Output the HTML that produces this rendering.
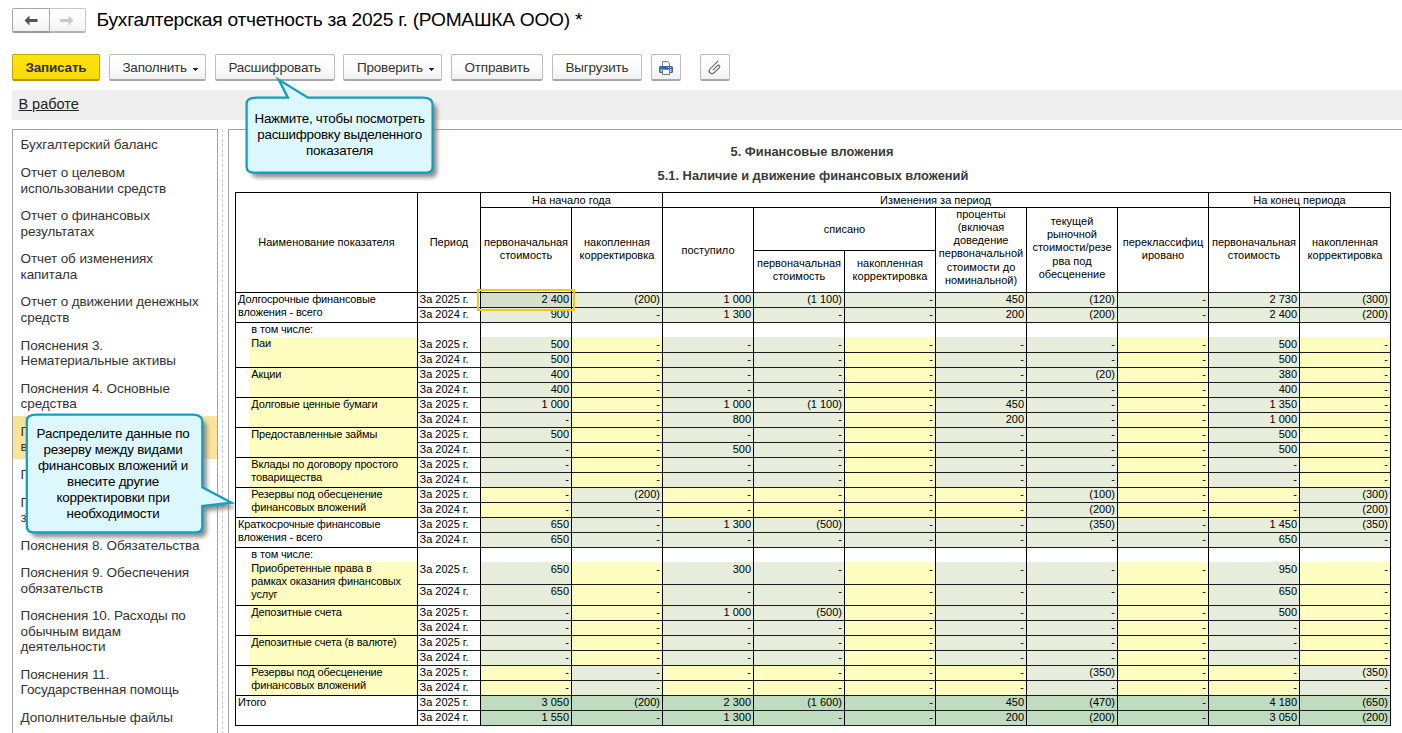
<!DOCTYPE html><html><head><meta charset="utf-8"><style>
html,body{margin:0;padding:0;}
body{width:1402px;height:733px;overflow:hidden;position:relative;background:#fff;font-family:"Liberation Sans",sans-serif;color:#333;}
.t{position:absolute;white-space:nowrap;}
.r{position:absolute;}
.btn{position:absolute;top:54px;height:24px;border:1px solid #bcbcbc;border-bottom:2px solid #a8a8a8;border-radius:2px;background:linear-gradient(#ffffff 0%,#fdfdfd 45%,#f1f1f1 100%);box-sizing:content-box;}
</style></head><body>
<div class="r" style="left:49px;top:8px;width:35px;height:22px;border:1px solid #c6c6c6;border-bottom:2px solid #b4b4b4;border-radius:0 2px 2px 0;background:linear-gradient(#fff 0%,#fcfcfc 50%,#f1f1f1 100%);"></div>
<div class="r" style="left:12px;top:8px;width:36px;height:22px;border:1px solid #a9a9a9;border-bottom:2px solid #9a9a9a;border-radius:2px 0 0 2px;background:linear-gradient(#fff 0%,#fcfcfc 50%,#f1f1f1 100%);"></div>
<svg class="r" style="left:0;top:0" width="100" height="40">
<path d="M24.5 20.5 L29.5 15.5 L29.5 19 L37.5 19 L37.5 22 L29.5 22 L29.5 25.5 Z" fill="#555"/>
<path d="M73.5 20.5 L68.5 15.5 L68.5 19 L60 19 L60 22 L68.5 22 L68.5 25.5 Z" fill="#c9c9c9"/>
</svg>
<div class="t" style="left:96.6px;top:8.45px;font-size:19.2px;line-height:23px;letter-spacing:-0.26px;color:#000;">Бухгалтерская отчетность за 2025 г. (РОМАШКА ООО) *</div>
<div class="btn" style="left:12px;width:86px;background:linear-gradient(#ffe312,#fbdb00);border-color:#c2a900;border-bottom-color:#ad9500;"></div>
<div class="t" style="left:25.5px;top:59.52px;font-size:13.5px;line-height:16px;font-weight:700;letter-spacing:-0.2px;">Записать</div>
<div class="btn" style="left:109px;width:95px;"></div>
<div class="t" style="left:122.4px;top:59.52px;font-size:13.5px;line-height:16px;letter-spacing:-0.2px;">Заполнить</div>
<div class="r" style="left:193px;top:68px;width:5px;height:1px;background:#222;"></div>
<div class="r" style="left:194px;top:69px;width:3px;height:1px;background:#222;"></div>
<div class="r" style="left:195px;top:70px;width:1px;height:1px;background:#222;"></div>
<div class="btn" style="left:215px;width:118px;"></div>
<div class="t" style="left:228.4px;top:59.52px;font-size:13.5px;line-height:16px;letter-spacing:-0.2px;">Расшифровать</div>
<div class="btn" style="left:343px;width:97px;"></div>
<div class="t" style="left:357px;top:59.52px;font-size:13.5px;line-height:16px;letter-spacing:-0.2px;">Проверить</div>
<div class="r" style="left:429px;top:68px;width:5px;height:1px;background:#222;"></div>
<div class="r" style="left:430px;top:69px;width:3px;height:1px;background:#222;"></div>
<div class="r" style="left:431px;top:70px;width:1px;height:1px;background:#222;"></div>
<div class="btn" style="left:451px;width:90px;"></div>
<div class="t" style="left:464.5px;top:59.52px;font-size:13.5px;line-height:16px;letter-spacing:-0.2px;">Отправить</div>
<div class="btn" style="left:552px;width:88px;"></div>
<div class="t" style="left:565.5px;top:59.52px;font-size:13.5px;line-height:16px;letter-spacing:-0.2px;">Выгрузить</div>
<div class="btn" style="left:651px;width:28px;"></div>
<svg class="r" style="left:651px;top:54px" width="30" height="26" viewBox="651 54 30 26">
<path d="M662.5 61.5 H667.5 L669.5 63.5 V67 H662.5 Z" fill="#fff" stroke="#5a8aa8" stroke-width="1"/>
<rect x="659" y="66" width="14" height="7" rx="1.5" fill="#3a64a2"/>
<rect x="660.5" y="69" width="11" height="3" fill="#8fd6c9"/>
<rect x="668" y="67" width="1" height="1" fill="#fff"/><rect x="670" y="67" width="1" height="1" fill="#fff"/>
<path d="M662.5 69.5 H669.5 V74.5 H662.5 Z" fill="#fff" stroke="#5a8aa8" stroke-width="1"/>
</svg>
<div class="btn" style="left:700px;width:28px;"></div>
<svg class="r" style="left:700px;top:54px" width="30" height="26" viewBox="700 54 30 26">
<g transform="translate(0.6 0.6) rotate(45 714.8 67)"><path d="M712 60.3 V71.8 A2.8 2.8 0 0 0 717.6 71.8 V64.2 A1.4 1.4 0 0 0 714.8 64.2 V70.6" fill="none" stroke="#555" stroke-width="1"/></g>
</svg>
<div class="r" style="left:12px;top:90px;width:1390px;height:30px;background:#efefef;"></div>
<div class="t" style="left:18.4px;top:95.88px;font-size:14.5px;line-height:17px;color:#222;text-decoration:underline;">В работе</div>
<div class="r" style="left:12px;top:129px;width:204px;height:620px;border:1px solid #a3a3a3;background:#fff;"></div>
<div class="t" style="left:20.6px;top:137.42px;font-size:13.5px;line-height:16px;letter-spacing:-0.1px;">Бухгалтерский баланс</div>
<div class="t" style="left:20.6px;top:165.12px;font-size:13.5px;line-height:16px;letter-spacing:-0.1px;">Отчет о целевом</div>
<div class="t" style="left:20.6px;top:180.52px;font-size:13.5px;line-height:16px;letter-spacing:-0.1px;">использовании средств</div>
<div class="t" style="left:20.6px;top:208.22px;font-size:13.5px;line-height:16px;letter-spacing:-0.1px;">Отчет о финансовых</div>
<div class="t" style="left:20.6px;top:223.62px;font-size:13.5px;line-height:16px;letter-spacing:-0.1px;">результатах</div>
<div class="t" style="left:20.6px;top:251.32px;font-size:13.5px;line-height:16px;letter-spacing:-0.1px;">Отчет об изменениях</div>
<div class="t" style="left:20.6px;top:266.72px;font-size:13.5px;line-height:16px;letter-spacing:-0.1px;">капитала</div>
<div class="t" style="left:20.6px;top:294.42px;font-size:13.5px;line-height:16px;letter-spacing:-0.1px;">Отчет о движении денежных</div>
<div class="t" style="left:20.6px;top:309.82px;font-size:13.5px;line-height:16px;letter-spacing:-0.1px;">средств</div>
<div class="t" style="left:20.6px;top:337.52px;font-size:13.5px;line-height:16px;letter-spacing:-0.1px;">Пояснения 3.</div>
<div class="t" style="left:20.6px;top:352.92px;font-size:13.5px;line-height:16px;letter-spacing:-0.1px;">Нематериальные активы</div>
<div class="t" style="left:20.6px;top:380.62px;font-size:13.5px;line-height:16px;letter-spacing:-0.1px;">Пояснения 4. Основные</div>
<div class="t" style="left:20.6px;top:396.02px;font-size:13.5px;line-height:16px;letter-spacing:-0.1px;">средства</div>
<div class="r" style="left:13px;top:416.00000000000006px;width:204px;height:43px;background:#fbe39b;"></div>
<div class="t" style="left:20.6px;top:423.72px;font-size:13.5px;line-height:16px;letter-spacing:-0.1px;">Пояснения 5. Финансовые</div>
<div class="t" style="left:20.6px;top:439.12px;font-size:13.5px;line-height:16px;letter-spacing:-0.1px;">вложения</div>
<div class="t" style="left:20.6px;top:466.82px;font-size:13.5px;line-height:16px;letter-spacing:-0.1px;">Пояснения 6. Запасы</div>
<div class="t" style="left:20.6px;top:494.52px;font-size:13.5px;line-height:16px;letter-spacing:-0.1px;">Пояснения 7. Дебиторская</div>
<div class="t" style="left:20.6px;top:509.92px;font-size:13.5px;line-height:16px;letter-spacing:-0.1px;">задолженность</div>
<div class="t" style="left:20.6px;top:537.62px;font-size:13.5px;line-height:16px;letter-spacing:-0.1px;">Пояснения 8. Обязательства</div>
<div class="t" style="left:20.6px;top:565.32px;font-size:13.5px;line-height:16px;letter-spacing:-0.1px;">Пояснения 9. Обеспечения</div>
<div class="t" style="left:20.6px;top:580.72px;font-size:13.5px;line-height:16px;letter-spacing:-0.1px;">обязательств</div>
<div class="t" style="left:20.6px;top:608.42px;font-size:13.5px;line-height:16px;letter-spacing:-0.1px;">Пояснения 10. Расходы по</div>
<div class="t" style="left:20.6px;top:623.82px;font-size:13.5px;line-height:16px;letter-spacing:-0.1px;">обычным видам</div>
<div class="t" style="left:20.6px;top:639.22px;font-size:13.5px;line-height:16px;letter-spacing:-0.1px;">деятельности</div>
<div class="t" style="left:20.6px;top:666.92px;font-size:13.5px;line-height:16px;letter-spacing:-0.1px;">Пояснения 11.</div>
<div class="t" style="left:20.6px;top:682.32px;font-size:13.5px;line-height:16px;letter-spacing:-0.1px;">Государственная помощь</div>
<div class="t" style="left:20.6px;top:710.02px;font-size:13.5px;line-height:16px;letter-spacing:-0.1px;">Дополнительные файлы</div>
<div class="r" style="left:222px;top:129px;width:0;height:610px;border-left:1px dashed #c9c9c9;"></div>
<div class="r" style="left:228px;top:129px;width:1200px;height:620px;border-left:1px solid #a3a3a3;border-top:1px solid #a3a3a3;"></div>
<div class="t" style="left:612px;top:143.75px;font-size:12.85px;line-height:15px;font-weight:700;color:#3a3a3a;width:400px;text-align:center;">5. Финансовые вложения</div>
<div class="t" style="left:513px;top:168.05px;font-size:12.85px;line-height:15px;font-weight:700;color:#3a3a3a;width:600px;text-align:center;">5.1. Наличие и движение финансовых вложений</div>
<div class="t" style="left:238px;top:293.49px;font-size:11px;line-height:13px;letter-spacing:-0.15px;color:#000;">Долгосрочные финансовые</div>
<div class="t" style="left:238px;top:306.39px;font-size:11px;line-height:13px;letter-spacing:-0.15px;color:#000;">вложения - всего</div>
<div class="r" style="left:481px;top:293px;width:90px;height:14px;background:#d6dfcb;"></div>
<div class="t" style="left:481px;top:293.19px;font-size:11px;line-height:13px;color:#000;width:88px;text-align:right;">2 400</div>
<div class="r" style="left:572px;top:293px;width:90px;height:14px;background:#e6eedb;"></div>
<div class="t" style="left:572px;top:293.19px;font-size:11px;line-height:13px;color:#000;width:88px;text-align:right;">(200)</div>
<div class="r" style="left:663px;top:293px;width:90px;height:14px;background:#e6eedb;"></div>
<div class="t" style="left:663px;top:293.19px;font-size:11px;line-height:13px;color:#000;width:88px;text-align:right;">1 000</div>
<div class="r" style="left:754px;top:293px;width:90px;height:14px;background:#e6eedb;"></div>
<div class="t" style="left:754px;top:293.19px;font-size:11px;line-height:13px;color:#000;width:88px;text-align:right;">(1 100)</div>
<div class="r" style="left:845px;top:293px;width:90px;height:14px;background:#e6eedb;"></div>
<div class="t" style="left:845px;top:293.19px;font-size:11px;line-height:13px;color:#000;width:88px;text-align:right;">-</div>
<div class="r" style="left:936px;top:293px;width:90px;height:14px;background:#e6eedb;"></div>
<div class="t" style="left:936px;top:293.19px;font-size:11px;line-height:13px;color:#000;width:88px;text-align:right;">450</div>
<div class="r" style="left:1027px;top:293px;width:90px;height:14px;background:#e6eedb;"></div>
<div class="t" style="left:1027px;top:293.19px;font-size:11px;line-height:13px;color:#000;width:88px;text-align:right;">(120)</div>
<div class="r" style="left:1118px;top:293px;width:90px;height:14px;background:#e6eedb;"></div>
<div class="t" style="left:1118px;top:293.19px;font-size:11px;line-height:13px;color:#000;width:88px;text-align:right;">-</div>
<div class="r" style="left:1209px;top:293px;width:90px;height:14px;background:#e6eedb;"></div>
<div class="t" style="left:1209px;top:293.19px;font-size:11px;line-height:13px;color:#000;width:88px;text-align:right;">2 730</div>
<div class="r" style="left:1300px;top:293px;width:90px;height:14px;background:#e6eedb;"></div>
<div class="t" style="left:1300px;top:293.19px;font-size:11px;line-height:13px;color:#000;width:88px;text-align:right;">(300)</div>
<div class="t" style="left:419.5px;top:293.19px;font-size:11px;line-height:13px;color:#000;">За 2025 г.</div>
<div class="r" style="left:481px;top:308px;width:90px;height:14px;background:#e6eedb;"></div>
<div class="t" style="left:481px;top:308.19px;font-size:11px;line-height:13px;color:#000;width:88px;text-align:right;">900</div>
<div class="r" style="left:572px;top:308px;width:90px;height:14px;background:#e6eedb;"></div>
<div class="t" style="left:572px;top:308.19px;font-size:11px;line-height:13px;color:#000;width:88px;text-align:right;">-</div>
<div class="r" style="left:663px;top:308px;width:90px;height:14px;background:#e6eedb;"></div>
<div class="t" style="left:663px;top:308.19px;font-size:11px;line-height:13px;color:#000;width:88px;text-align:right;">1 300</div>
<div class="r" style="left:754px;top:308px;width:90px;height:14px;background:#e6eedb;"></div>
<div class="t" style="left:754px;top:308.19px;font-size:11px;line-height:13px;color:#000;width:88px;text-align:right;">-</div>
<div class="r" style="left:845px;top:308px;width:90px;height:14px;background:#e6eedb;"></div>
<div class="t" style="left:845px;top:308.19px;font-size:11px;line-height:13px;color:#000;width:88px;text-align:right;">-</div>
<div class="r" style="left:936px;top:308px;width:90px;height:14px;background:#e6eedb;"></div>
<div class="t" style="left:936px;top:308.19px;font-size:11px;line-height:13px;color:#000;width:88px;text-align:right;">200</div>
<div class="r" style="left:1027px;top:308px;width:90px;height:14px;background:#e6eedb;"></div>
<div class="t" style="left:1027px;top:308.19px;font-size:11px;line-height:13px;color:#000;width:88px;text-align:right;">(200)</div>
<div class="r" style="left:1118px;top:308px;width:90px;height:14px;background:#e6eedb;"></div>
<div class="t" style="left:1118px;top:308.19px;font-size:11px;line-height:13px;color:#000;width:88px;text-align:right;">-</div>
<div class="r" style="left:1209px;top:308px;width:90px;height:14px;background:#e6eedb;"></div>
<div class="t" style="left:1209px;top:308.19px;font-size:11px;line-height:13px;color:#000;width:88px;text-align:right;">2 400</div>
<div class="r" style="left:1300px;top:308px;width:90px;height:14px;background:#e6eedb;"></div>
<div class="t" style="left:1300px;top:308.19px;font-size:11px;line-height:13px;color:#000;width:88px;text-align:right;">(200)</div>
<div class="t" style="left:419.5px;top:308.19px;font-size:11px;line-height:13px;color:#000;">За 2024 г.</div>
<div class="t" style="left:251.3px;top:323.49px;font-size:11px;line-height:13px;letter-spacing:-0.15px;color:#000;">в том числе:</div>
<div class="r" style="left:249px;top:337px;width:168px;height:30px;background:#fffec0;"></div>
<div class="t" style="left:251.3px;top:337.49px;font-size:11px;line-height:13px;letter-spacing:-0.15px;color:#000;">Паи</div>
<div class="r" style="left:481px;top:337px;width:90px;height:15px;background:#e6eedb;"></div>
<div class="t" style="left:481px;top:338.19px;font-size:11px;line-height:13px;color:#000;width:88px;text-align:right;">500</div>
<div class="r" style="left:572px;top:337px;width:90px;height:15px;background:#fffec0;"></div>
<div class="t" style="left:572px;top:338.19px;font-size:11px;line-height:13px;color:#000;width:88px;text-align:right;">-</div>
<div class="r" style="left:663px;top:337px;width:90px;height:15px;background:#e6eedb;"></div>
<div class="t" style="left:663px;top:338.19px;font-size:11px;line-height:13px;color:#000;width:88px;text-align:right;">-</div>
<div class="r" style="left:754px;top:337px;width:90px;height:15px;background:#e6eedb;"></div>
<div class="t" style="left:754px;top:338.19px;font-size:11px;line-height:13px;color:#000;width:88px;text-align:right;">-</div>
<div class="r" style="left:845px;top:337px;width:90px;height:15px;background:#fffec0;"></div>
<div class="t" style="left:845px;top:338.19px;font-size:11px;line-height:13px;color:#000;width:88px;text-align:right;">-</div>
<div class="r" style="left:936px;top:337px;width:90px;height:15px;background:#e6eedb;"></div>
<div class="t" style="left:936px;top:338.19px;font-size:11px;line-height:13px;color:#000;width:88px;text-align:right;">-</div>
<div class="r" style="left:1027px;top:337px;width:90px;height:15px;background:#e6eedb;"></div>
<div class="t" style="left:1027px;top:338.19px;font-size:11px;line-height:13px;color:#000;width:88px;text-align:right;">-</div>
<div class="r" style="left:1118px;top:337px;width:90px;height:15px;background:#fffec0;"></div>
<div class="t" style="left:1118px;top:338.19px;font-size:11px;line-height:13px;color:#000;width:88px;text-align:right;">-</div>
<div class="r" style="left:1209px;top:337px;width:90px;height:15px;background:#e6eedb;"></div>
<div class="t" style="left:1209px;top:338.19px;font-size:11px;line-height:13px;color:#000;width:88px;text-align:right;">500</div>
<div class="r" style="left:1300px;top:337px;width:90px;height:15px;background:#fffec0;"></div>
<div class="t" style="left:1300px;top:338.19px;font-size:11px;line-height:13px;color:#000;width:88px;text-align:right;">-</div>
<div class="t" style="left:419.5px;top:338.19px;font-size:11px;line-height:13px;color:#000;">За 2025 г.</div>
<div class="r" style="left:481px;top:353px;width:90px;height:14px;background:#e6eedb;"></div>
<div class="t" style="left:481px;top:353.19px;font-size:11px;line-height:13px;color:#000;width:88px;text-align:right;">500</div>
<div class="r" style="left:572px;top:353px;width:90px;height:14px;background:#fffec0;"></div>
<div class="t" style="left:572px;top:353.19px;font-size:11px;line-height:13px;color:#000;width:88px;text-align:right;">-</div>
<div class="r" style="left:663px;top:353px;width:90px;height:14px;background:#e6eedb;"></div>
<div class="t" style="left:663px;top:353.19px;font-size:11px;line-height:13px;color:#000;width:88px;text-align:right;">-</div>
<div class="r" style="left:754px;top:353px;width:90px;height:14px;background:#e6eedb;"></div>
<div class="t" style="left:754px;top:353.19px;font-size:11px;line-height:13px;color:#000;width:88px;text-align:right;">-</div>
<div class="r" style="left:845px;top:353px;width:90px;height:14px;background:#fffec0;"></div>
<div class="t" style="left:845px;top:353.19px;font-size:11px;line-height:13px;color:#000;width:88px;text-align:right;">-</div>
<div class="r" style="left:936px;top:353px;width:90px;height:14px;background:#e6eedb;"></div>
<div class="t" style="left:936px;top:353.19px;font-size:11px;line-height:13px;color:#000;width:88px;text-align:right;">-</div>
<div class="r" style="left:1027px;top:353px;width:90px;height:14px;background:#e6eedb;"></div>
<div class="t" style="left:1027px;top:353.19px;font-size:11px;line-height:13px;color:#000;width:88px;text-align:right;">-</div>
<div class="r" style="left:1118px;top:353px;width:90px;height:14px;background:#fffec0;"></div>
<div class="t" style="left:1118px;top:353.19px;font-size:11px;line-height:13px;color:#000;width:88px;text-align:right;">-</div>
<div class="r" style="left:1209px;top:353px;width:90px;height:14px;background:#e6eedb;"></div>
<div class="t" style="left:1209px;top:353.19px;font-size:11px;line-height:13px;color:#000;width:88px;text-align:right;">500</div>
<div class="r" style="left:1300px;top:353px;width:90px;height:14px;background:#fffec0;"></div>
<div class="t" style="left:1300px;top:353.19px;font-size:11px;line-height:13px;color:#000;width:88px;text-align:right;">-</div>
<div class="t" style="left:419.5px;top:353.19px;font-size:11px;line-height:13px;color:#000;">За 2024 г.</div>
<div class="r" style="left:249px;top:368px;width:168px;height:29px;background:#fffec0;"></div>
<div class="t" style="left:251.3px;top:368.49px;font-size:11px;line-height:13px;letter-spacing:-0.15px;color:#000;">Акции</div>
<div class="r" style="left:481px;top:368px;width:90px;height:14px;background:#e6eedb;"></div>
<div class="t" style="left:481px;top:368.19px;font-size:11px;line-height:13px;color:#000;width:88px;text-align:right;">400</div>
<div class="r" style="left:572px;top:368px;width:90px;height:14px;background:#fffec0;"></div>
<div class="t" style="left:572px;top:368.19px;font-size:11px;line-height:13px;color:#000;width:88px;text-align:right;">-</div>
<div class="r" style="left:663px;top:368px;width:90px;height:14px;background:#e6eedb;"></div>
<div class="t" style="left:663px;top:368.19px;font-size:11px;line-height:13px;color:#000;width:88px;text-align:right;">-</div>
<div class="r" style="left:754px;top:368px;width:90px;height:14px;background:#e6eedb;"></div>
<div class="t" style="left:754px;top:368.19px;font-size:11px;line-height:13px;color:#000;width:88px;text-align:right;">-</div>
<div class="r" style="left:845px;top:368px;width:90px;height:14px;background:#fffec0;"></div>
<div class="t" style="left:845px;top:368.19px;font-size:11px;line-height:13px;color:#000;width:88px;text-align:right;">-</div>
<div class="r" style="left:936px;top:368px;width:90px;height:14px;background:#e6eedb;"></div>
<div class="t" style="left:936px;top:368.19px;font-size:11px;line-height:13px;color:#000;width:88px;text-align:right;">-</div>
<div class="r" style="left:1027px;top:368px;width:90px;height:14px;background:#e6eedb;"></div>
<div class="t" style="left:1027px;top:368.19px;font-size:11px;line-height:13px;color:#000;width:88px;text-align:right;">(20)</div>
<div class="r" style="left:1118px;top:368px;width:90px;height:14px;background:#fffec0;"></div>
<div class="t" style="left:1118px;top:368.19px;font-size:11px;line-height:13px;color:#000;width:88px;text-align:right;">-</div>
<div class="r" style="left:1209px;top:368px;width:90px;height:14px;background:#e6eedb;"></div>
<div class="t" style="left:1209px;top:368.19px;font-size:11px;line-height:13px;color:#000;width:88px;text-align:right;">380</div>
<div class="r" style="left:1300px;top:368px;width:90px;height:14px;background:#fffec0;"></div>
<div class="t" style="left:1300px;top:368.19px;font-size:11px;line-height:13px;color:#000;width:88px;text-align:right;">-</div>
<div class="t" style="left:419.5px;top:368.19px;font-size:11px;line-height:13px;color:#000;">За 2025 г.</div>
<div class="r" style="left:481px;top:383px;width:90px;height:14px;background:#e6eedb;"></div>
<div class="t" style="left:481px;top:383.19px;font-size:11px;line-height:13px;color:#000;width:88px;text-align:right;">400</div>
<div class="r" style="left:572px;top:383px;width:90px;height:14px;background:#fffec0;"></div>
<div class="t" style="left:572px;top:383.19px;font-size:11px;line-height:13px;color:#000;width:88px;text-align:right;">-</div>
<div class="r" style="left:663px;top:383px;width:90px;height:14px;background:#e6eedb;"></div>
<div class="t" style="left:663px;top:383.19px;font-size:11px;line-height:13px;color:#000;width:88px;text-align:right;">-</div>
<div class="r" style="left:754px;top:383px;width:90px;height:14px;background:#e6eedb;"></div>
<div class="t" style="left:754px;top:383.19px;font-size:11px;line-height:13px;color:#000;width:88px;text-align:right;">-</div>
<div class="r" style="left:845px;top:383px;width:90px;height:14px;background:#fffec0;"></div>
<div class="t" style="left:845px;top:383.19px;font-size:11px;line-height:13px;color:#000;width:88px;text-align:right;">-</div>
<div class="r" style="left:936px;top:383px;width:90px;height:14px;background:#e6eedb;"></div>
<div class="t" style="left:936px;top:383.19px;font-size:11px;line-height:13px;color:#000;width:88px;text-align:right;">-</div>
<div class="r" style="left:1027px;top:383px;width:90px;height:14px;background:#e6eedb;"></div>
<div class="t" style="left:1027px;top:383.19px;font-size:11px;line-height:13px;color:#000;width:88px;text-align:right;">-</div>
<div class="r" style="left:1118px;top:383px;width:90px;height:14px;background:#fffec0;"></div>
<div class="t" style="left:1118px;top:383.19px;font-size:11px;line-height:13px;color:#000;width:88px;text-align:right;">-</div>
<div class="r" style="left:1209px;top:383px;width:90px;height:14px;background:#e6eedb;"></div>
<div class="t" style="left:1209px;top:383.19px;font-size:11px;line-height:13px;color:#000;width:88px;text-align:right;">400</div>
<div class="r" style="left:1300px;top:383px;width:90px;height:14px;background:#fffec0;"></div>
<div class="t" style="left:1300px;top:383.19px;font-size:11px;line-height:13px;color:#000;width:88px;text-align:right;">-</div>
<div class="t" style="left:419.5px;top:383.19px;font-size:11px;line-height:13px;color:#000;">За 2024 г.</div>
<div class="r" style="left:249px;top:398px;width:168px;height:29px;background:#fffec0;"></div>
<div class="t" style="left:251.3px;top:398.49px;font-size:11px;line-height:13px;letter-spacing:-0.15px;color:#000;">Долговые ценные бумаги</div>
<div class="r" style="left:481px;top:398px;width:90px;height:14px;background:#e6eedb;"></div>
<div class="t" style="left:481px;top:398.19px;font-size:11px;line-height:13px;color:#000;width:88px;text-align:right;">1 000</div>
<div class="r" style="left:572px;top:398px;width:90px;height:14px;background:#fffec0;"></div>
<div class="t" style="left:572px;top:398.19px;font-size:11px;line-height:13px;color:#000;width:88px;text-align:right;">-</div>
<div class="r" style="left:663px;top:398px;width:90px;height:14px;background:#e6eedb;"></div>
<div class="t" style="left:663px;top:398.19px;font-size:11px;line-height:13px;color:#000;width:88px;text-align:right;">1 000</div>
<div class="r" style="left:754px;top:398px;width:90px;height:14px;background:#e6eedb;"></div>
<div class="t" style="left:754px;top:398.19px;font-size:11px;line-height:13px;color:#000;width:88px;text-align:right;">(1 100)</div>
<div class="r" style="left:845px;top:398px;width:90px;height:14px;background:#fffec0;"></div>
<div class="t" style="left:845px;top:398.19px;font-size:11px;line-height:13px;color:#000;width:88px;text-align:right;">-</div>
<div class="r" style="left:936px;top:398px;width:90px;height:14px;background:#e6eedb;"></div>
<div class="t" style="left:936px;top:398.19px;font-size:11px;line-height:13px;color:#000;width:88px;text-align:right;">450</div>
<div class="r" style="left:1027px;top:398px;width:90px;height:14px;background:#e6eedb;"></div>
<div class="t" style="left:1027px;top:398.19px;font-size:11px;line-height:13px;color:#000;width:88px;text-align:right;">-</div>
<div class="r" style="left:1118px;top:398px;width:90px;height:14px;background:#fffec0;"></div>
<div class="t" style="left:1118px;top:398.19px;font-size:11px;line-height:13px;color:#000;width:88px;text-align:right;">-</div>
<div class="r" style="left:1209px;top:398px;width:90px;height:14px;background:#e6eedb;"></div>
<div class="t" style="left:1209px;top:398.19px;font-size:11px;line-height:13px;color:#000;width:88px;text-align:right;">1 350</div>
<div class="r" style="left:1300px;top:398px;width:90px;height:14px;background:#fffec0;"></div>
<div class="t" style="left:1300px;top:398.19px;font-size:11px;line-height:13px;color:#000;width:88px;text-align:right;">-</div>
<div class="t" style="left:419.5px;top:398.19px;font-size:11px;line-height:13px;color:#000;">За 2025 г.</div>
<div class="r" style="left:481px;top:413px;width:90px;height:14px;background:#e6eedb;"></div>
<div class="t" style="left:481px;top:413.19px;font-size:11px;line-height:13px;color:#000;width:88px;text-align:right;">-</div>
<div class="r" style="left:572px;top:413px;width:90px;height:14px;background:#fffec0;"></div>
<div class="t" style="left:572px;top:413.19px;font-size:11px;line-height:13px;color:#000;width:88px;text-align:right;">-</div>
<div class="r" style="left:663px;top:413px;width:90px;height:14px;background:#e6eedb;"></div>
<div class="t" style="left:663px;top:413.19px;font-size:11px;line-height:13px;color:#000;width:88px;text-align:right;">800</div>
<div class="r" style="left:754px;top:413px;width:90px;height:14px;background:#e6eedb;"></div>
<div class="t" style="left:754px;top:413.19px;font-size:11px;line-height:13px;color:#000;width:88px;text-align:right;">-</div>
<div class="r" style="left:845px;top:413px;width:90px;height:14px;background:#fffec0;"></div>
<div class="t" style="left:845px;top:413.19px;font-size:11px;line-height:13px;color:#000;width:88px;text-align:right;">-</div>
<div class="r" style="left:936px;top:413px;width:90px;height:14px;background:#e6eedb;"></div>
<div class="t" style="left:936px;top:413.19px;font-size:11px;line-height:13px;color:#000;width:88px;text-align:right;">200</div>
<div class="r" style="left:1027px;top:413px;width:90px;height:14px;background:#e6eedb;"></div>
<div class="t" style="left:1027px;top:413.19px;font-size:11px;line-height:13px;color:#000;width:88px;text-align:right;">-</div>
<div class="r" style="left:1118px;top:413px;width:90px;height:14px;background:#fffec0;"></div>
<div class="t" style="left:1118px;top:413.19px;font-size:11px;line-height:13px;color:#000;width:88px;text-align:right;">-</div>
<div class="r" style="left:1209px;top:413px;width:90px;height:14px;background:#e6eedb;"></div>
<div class="t" style="left:1209px;top:413.19px;font-size:11px;line-height:13px;color:#000;width:88px;text-align:right;">1 000</div>
<div class="r" style="left:1300px;top:413px;width:90px;height:14px;background:#fffec0;"></div>
<div class="t" style="left:1300px;top:413.19px;font-size:11px;line-height:13px;color:#000;width:88px;text-align:right;">-</div>
<div class="t" style="left:419.5px;top:413.19px;font-size:11px;line-height:13px;color:#000;">За 2024 г.</div>
<div class="r" style="left:249px;top:428px;width:168px;height:29px;background:#fffec0;"></div>
<div class="t" style="left:251.3px;top:428.49px;font-size:11px;line-height:13px;letter-spacing:-0.15px;color:#000;">Предоставленные займы</div>
<div class="r" style="left:481px;top:428px;width:90px;height:14px;background:#e6eedb;"></div>
<div class="t" style="left:481px;top:428.19px;font-size:11px;line-height:13px;color:#000;width:88px;text-align:right;">500</div>
<div class="r" style="left:572px;top:428px;width:90px;height:14px;background:#fffec0;"></div>
<div class="t" style="left:572px;top:428.19px;font-size:11px;line-height:13px;color:#000;width:88px;text-align:right;">-</div>
<div class="r" style="left:663px;top:428px;width:90px;height:14px;background:#e6eedb;"></div>
<div class="t" style="left:663px;top:428.19px;font-size:11px;line-height:13px;color:#000;width:88px;text-align:right;">-</div>
<div class="r" style="left:754px;top:428px;width:90px;height:14px;background:#e6eedb;"></div>
<div class="t" style="left:754px;top:428.19px;font-size:11px;line-height:13px;color:#000;width:88px;text-align:right;">-</div>
<div class="r" style="left:845px;top:428px;width:90px;height:14px;background:#fffec0;"></div>
<div class="t" style="left:845px;top:428.19px;font-size:11px;line-height:13px;color:#000;width:88px;text-align:right;">-</div>
<div class="r" style="left:936px;top:428px;width:90px;height:14px;background:#e6eedb;"></div>
<div class="t" style="left:936px;top:428.19px;font-size:11px;line-height:13px;color:#000;width:88px;text-align:right;">-</div>
<div class="r" style="left:1027px;top:428px;width:90px;height:14px;background:#e6eedb;"></div>
<div class="t" style="left:1027px;top:428.19px;font-size:11px;line-height:13px;color:#000;width:88px;text-align:right;">-</div>
<div class="r" style="left:1118px;top:428px;width:90px;height:14px;background:#fffec0;"></div>
<div class="t" style="left:1118px;top:428.19px;font-size:11px;line-height:13px;color:#000;width:88px;text-align:right;">-</div>
<div class="r" style="left:1209px;top:428px;width:90px;height:14px;background:#e6eedb;"></div>
<div class="t" style="left:1209px;top:428.19px;font-size:11px;line-height:13px;color:#000;width:88px;text-align:right;">500</div>
<div class="r" style="left:1300px;top:428px;width:90px;height:14px;background:#fffec0;"></div>
<div class="t" style="left:1300px;top:428.19px;font-size:11px;line-height:13px;color:#000;width:88px;text-align:right;">-</div>
<div class="t" style="left:419.5px;top:428.19px;font-size:11px;line-height:13px;color:#000;">За 2025 г.</div>
<div class="r" style="left:481px;top:443px;width:90px;height:14px;background:#e6eedb;"></div>
<div class="t" style="left:481px;top:443.19px;font-size:11px;line-height:13px;color:#000;width:88px;text-align:right;">-</div>
<div class="r" style="left:572px;top:443px;width:90px;height:14px;background:#fffec0;"></div>
<div class="t" style="left:572px;top:443.19px;font-size:11px;line-height:13px;color:#000;width:88px;text-align:right;">-</div>
<div class="r" style="left:663px;top:443px;width:90px;height:14px;background:#e6eedb;"></div>
<div class="t" style="left:663px;top:443.19px;font-size:11px;line-height:13px;color:#000;width:88px;text-align:right;">500</div>
<div class="r" style="left:754px;top:443px;width:90px;height:14px;background:#e6eedb;"></div>
<div class="t" style="left:754px;top:443.19px;font-size:11px;line-height:13px;color:#000;width:88px;text-align:right;">-</div>
<div class="r" style="left:845px;top:443px;width:90px;height:14px;background:#fffec0;"></div>
<div class="t" style="left:845px;top:443.19px;font-size:11px;line-height:13px;color:#000;width:88px;text-align:right;">-</div>
<div class="r" style="left:936px;top:443px;width:90px;height:14px;background:#e6eedb;"></div>
<div class="t" style="left:936px;top:443.19px;font-size:11px;line-height:13px;color:#000;width:88px;text-align:right;">-</div>
<div class="r" style="left:1027px;top:443px;width:90px;height:14px;background:#e6eedb;"></div>
<div class="t" style="left:1027px;top:443.19px;font-size:11px;line-height:13px;color:#000;width:88px;text-align:right;">-</div>
<div class="r" style="left:1118px;top:443px;width:90px;height:14px;background:#fffec0;"></div>
<div class="t" style="left:1118px;top:443.19px;font-size:11px;line-height:13px;color:#000;width:88px;text-align:right;">-</div>
<div class="r" style="left:1209px;top:443px;width:90px;height:14px;background:#e6eedb;"></div>
<div class="t" style="left:1209px;top:443.19px;font-size:11px;line-height:13px;color:#000;width:88px;text-align:right;">500</div>
<div class="r" style="left:1300px;top:443px;width:90px;height:14px;background:#fffec0;"></div>
<div class="t" style="left:1300px;top:443.19px;font-size:11px;line-height:13px;color:#000;width:88px;text-align:right;">-</div>
<div class="t" style="left:419.5px;top:443.19px;font-size:11px;line-height:13px;color:#000;">За 2024 г.</div>
<div class="r" style="left:249px;top:458px;width:168px;height:29px;background:#fffec0;"></div>
<div class="t" style="left:251.3px;top:458.49px;font-size:11px;line-height:13px;letter-spacing:-0.15px;color:#000;">Вклады по договору простого</div>
<div class="t" style="left:251.3px;top:471.39px;font-size:11px;line-height:13px;letter-spacing:-0.15px;color:#000;">товарищества</div>
<div class="r" style="left:481px;top:458px;width:90px;height:14px;background:#e6eedb;"></div>
<div class="t" style="left:481px;top:458.19px;font-size:11px;line-height:13px;color:#000;width:88px;text-align:right;">-</div>
<div class="r" style="left:572px;top:458px;width:90px;height:14px;background:#fffec0;"></div>
<div class="t" style="left:572px;top:458.19px;font-size:11px;line-height:13px;color:#000;width:88px;text-align:right;">-</div>
<div class="r" style="left:663px;top:458px;width:90px;height:14px;background:#e6eedb;"></div>
<div class="t" style="left:663px;top:458.19px;font-size:11px;line-height:13px;color:#000;width:88px;text-align:right;">-</div>
<div class="r" style="left:754px;top:458px;width:90px;height:14px;background:#e6eedb;"></div>
<div class="t" style="left:754px;top:458.19px;font-size:11px;line-height:13px;color:#000;width:88px;text-align:right;">-</div>
<div class="r" style="left:845px;top:458px;width:90px;height:14px;background:#fffec0;"></div>
<div class="t" style="left:845px;top:458.19px;font-size:11px;line-height:13px;color:#000;width:88px;text-align:right;">-</div>
<div class="r" style="left:936px;top:458px;width:90px;height:14px;background:#e6eedb;"></div>
<div class="t" style="left:936px;top:458.19px;font-size:11px;line-height:13px;color:#000;width:88px;text-align:right;">-</div>
<div class="r" style="left:1027px;top:458px;width:90px;height:14px;background:#e6eedb;"></div>
<div class="t" style="left:1027px;top:458.19px;font-size:11px;line-height:13px;color:#000;width:88px;text-align:right;">-</div>
<div class="r" style="left:1118px;top:458px;width:90px;height:14px;background:#fffec0;"></div>
<div class="t" style="left:1118px;top:458.19px;font-size:11px;line-height:13px;color:#000;width:88px;text-align:right;">-</div>
<div class="r" style="left:1209px;top:458px;width:90px;height:14px;background:#e6eedb;"></div>
<div class="t" style="left:1209px;top:458.19px;font-size:11px;line-height:13px;color:#000;width:88px;text-align:right;">-</div>
<div class="r" style="left:1300px;top:458px;width:90px;height:14px;background:#fffec0;"></div>
<div class="t" style="left:1300px;top:458.19px;font-size:11px;line-height:13px;color:#000;width:88px;text-align:right;">-</div>
<div class="t" style="left:419.5px;top:458.19px;font-size:11px;line-height:13px;color:#000;">За 2025 г.</div>
<div class="r" style="left:481px;top:473px;width:90px;height:14px;background:#e6eedb;"></div>
<div class="t" style="left:481px;top:473.19px;font-size:11px;line-height:13px;color:#000;width:88px;text-align:right;">-</div>
<div class="r" style="left:572px;top:473px;width:90px;height:14px;background:#fffec0;"></div>
<div class="t" style="left:572px;top:473.19px;font-size:11px;line-height:13px;color:#000;width:88px;text-align:right;">-</div>
<div class="r" style="left:663px;top:473px;width:90px;height:14px;background:#e6eedb;"></div>
<div class="t" style="left:663px;top:473.19px;font-size:11px;line-height:13px;color:#000;width:88px;text-align:right;">-</div>
<div class="r" style="left:754px;top:473px;width:90px;height:14px;background:#e6eedb;"></div>
<div class="t" style="left:754px;top:473.19px;font-size:11px;line-height:13px;color:#000;width:88px;text-align:right;">-</div>
<div class="r" style="left:845px;top:473px;width:90px;height:14px;background:#fffec0;"></div>
<div class="t" style="left:845px;top:473.19px;font-size:11px;line-height:13px;color:#000;width:88px;text-align:right;">-</div>
<div class="r" style="left:936px;top:473px;width:90px;height:14px;background:#e6eedb;"></div>
<div class="t" style="left:936px;top:473.19px;font-size:11px;line-height:13px;color:#000;width:88px;text-align:right;">-</div>
<div class="r" style="left:1027px;top:473px;width:90px;height:14px;background:#e6eedb;"></div>
<div class="t" style="left:1027px;top:473.19px;font-size:11px;line-height:13px;color:#000;width:88px;text-align:right;">-</div>
<div class="r" style="left:1118px;top:473px;width:90px;height:14px;background:#fffec0;"></div>
<div class="t" style="left:1118px;top:473.19px;font-size:11px;line-height:13px;color:#000;width:88px;text-align:right;">-</div>
<div class="r" style="left:1209px;top:473px;width:90px;height:14px;background:#e6eedb;"></div>
<div class="t" style="left:1209px;top:473.19px;font-size:11px;line-height:13px;color:#000;width:88px;text-align:right;">-</div>
<div class="r" style="left:1300px;top:473px;width:90px;height:14px;background:#fffec0;"></div>
<div class="t" style="left:1300px;top:473.19px;font-size:11px;line-height:13px;color:#000;width:88px;text-align:right;">-</div>
<div class="t" style="left:419.5px;top:473.19px;font-size:11px;line-height:13px;color:#000;">За 2024 г.</div>
<div class="r" style="left:249px;top:488px;width:168px;height:29px;background:#fffec0;"></div>
<div class="t" style="left:251.3px;top:488.49px;font-size:11px;line-height:13px;letter-spacing:-0.15px;color:#000;">Резервы под обесценение</div>
<div class="t" style="left:251.3px;top:501.39px;font-size:11px;line-height:13px;letter-spacing:-0.15px;color:#000;">финансовых вложений</div>
<div class="r" style="left:481px;top:488px;width:90px;height:14px;background:#fffec0;"></div>
<div class="t" style="left:481px;top:488.19px;font-size:11px;line-height:13px;color:#000;width:88px;text-align:right;">-</div>
<div class="r" style="left:572px;top:488px;width:90px;height:14px;background:#e6eedb;"></div>
<div class="t" style="left:572px;top:488.19px;font-size:11px;line-height:13px;color:#000;width:88px;text-align:right;">(200)</div>
<div class="r" style="left:663px;top:488px;width:90px;height:14px;background:#fffec0;"></div>
<div class="t" style="left:663px;top:488.19px;font-size:11px;line-height:13px;color:#000;width:88px;text-align:right;">-</div>
<div class="r" style="left:754px;top:488px;width:90px;height:14px;background:#fffec0;"></div>
<div class="t" style="left:754px;top:488.19px;font-size:11px;line-height:13px;color:#000;width:88px;text-align:right;">-</div>
<div class="r" style="left:845px;top:488px;width:90px;height:14px;background:#fffec0;"></div>
<div class="t" style="left:845px;top:488.19px;font-size:11px;line-height:13px;color:#000;width:88px;text-align:right;">-</div>
<div class="r" style="left:936px;top:488px;width:90px;height:14px;background:#fffec0;"></div>
<div class="t" style="left:936px;top:488.19px;font-size:11px;line-height:13px;color:#000;width:88px;text-align:right;">-</div>
<div class="r" style="left:1027px;top:488px;width:90px;height:14px;background:#e6eedb;"></div>
<div class="t" style="left:1027px;top:488.19px;font-size:11px;line-height:13px;color:#000;width:88px;text-align:right;">(100)</div>
<div class="r" style="left:1118px;top:488px;width:90px;height:14px;background:#fffec0;"></div>
<div class="t" style="left:1118px;top:488.19px;font-size:11px;line-height:13px;color:#000;width:88px;text-align:right;">-</div>
<div class="r" style="left:1209px;top:488px;width:90px;height:14px;background:#fffec0;"></div>
<div class="t" style="left:1209px;top:488.19px;font-size:11px;line-height:13px;color:#000;width:88px;text-align:right;">-</div>
<div class="r" style="left:1300px;top:488px;width:90px;height:14px;background:#e6eedb;"></div>
<div class="t" style="left:1300px;top:488.19px;font-size:11px;line-height:13px;color:#000;width:88px;text-align:right;">(300)</div>
<div class="t" style="left:419.5px;top:488.19px;font-size:11px;line-height:13px;color:#000;">За 2025 г.</div>
<div class="r" style="left:481px;top:503px;width:90px;height:14px;background:#fffec0;"></div>
<div class="t" style="left:481px;top:503.19px;font-size:11px;line-height:13px;color:#000;width:88px;text-align:right;">-</div>
<div class="r" style="left:572px;top:503px;width:90px;height:14px;background:#e6eedb;"></div>
<div class="t" style="left:572px;top:503.19px;font-size:11px;line-height:13px;color:#000;width:88px;text-align:right;">-</div>
<div class="r" style="left:663px;top:503px;width:90px;height:14px;background:#fffec0;"></div>
<div class="t" style="left:663px;top:503.19px;font-size:11px;line-height:13px;color:#000;width:88px;text-align:right;">-</div>
<div class="r" style="left:754px;top:503px;width:90px;height:14px;background:#fffec0;"></div>
<div class="t" style="left:754px;top:503.19px;font-size:11px;line-height:13px;color:#000;width:88px;text-align:right;">-</div>
<div class="r" style="left:845px;top:503px;width:90px;height:14px;background:#fffec0;"></div>
<div class="t" style="left:845px;top:503.19px;font-size:11px;line-height:13px;color:#000;width:88px;text-align:right;">-</div>
<div class="r" style="left:936px;top:503px;width:90px;height:14px;background:#fffec0;"></div>
<div class="t" style="left:936px;top:503.19px;font-size:11px;line-height:13px;color:#000;width:88px;text-align:right;">-</div>
<div class="r" style="left:1027px;top:503px;width:90px;height:14px;background:#e6eedb;"></div>
<div class="t" style="left:1027px;top:503.19px;font-size:11px;line-height:13px;color:#000;width:88px;text-align:right;">(200)</div>
<div class="r" style="left:1118px;top:503px;width:90px;height:14px;background:#fffec0;"></div>
<div class="t" style="left:1118px;top:503.19px;font-size:11px;line-height:13px;color:#000;width:88px;text-align:right;">-</div>
<div class="r" style="left:1209px;top:503px;width:90px;height:14px;background:#fffec0;"></div>
<div class="t" style="left:1209px;top:503.19px;font-size:11px;line-height:13px;color:#000;width:88px;text-align:right;">-</div>
<div class="r" style="left:1300px;top:503px;width:90px;height:14px;background:#e6eedb;"></div>
<div class="t" style="left:1300px;top:503.19px;font-size:11px;line-height:13px;color:#000;width:88px;text-align:right;">(200)</div>
<div class="t" style="left:419.5px;top:503.19px;font-size:11px;line-height:13px;color:#000;">За 2024 г.</div>
<div class="t" style="left:238px;top:518.49px;font-size:11px;line-height:13px;letter-spacing:-0.15px;color:#000;">Краткосрочные финансовые</div>
<div class="t" style="left:238px;top:531.39px;font-size:11px;line-height:13px;letter-spacing:-0.15px;color:#000;">вложения - всего</div>
<div class="r" style="left:481px;top:518px;width:90px;height:14px;background:#e6eedb;"></div>
<div class="t" style="left:481px;top:518.19px;font-size:11px;line-height:13px;color:#000;width:88px;text-align:right;">650</div>
<div class="r" style="left:572px;top:518px;width:90px;height:14px;background:#e6eedb;"></div>
<div class="t" style="left:572px;top:518.19px;font-size:11px;line-height:13px;color:#000;width:88px;text-align:right;">-</div>
<div class="r" style="left:663px;top:518px;width:90px;height:14px;background:#e6eedb;"></div>
<div class="t" style="left:663px;top:518.19px;font-size:11px;line-height:13px;color:#000;width:88px;text-align:right;">1 300</div>
<div class="r" style="left:754px;top:518px;width:90px;height:14px;background:#e6eedb;"></div>
<div class="t" style="left:754px;top:518.19px;font-size:11px;line-height:13px;color:#000;width:88px;text-align:right;">(500)</div>
<div class="r" style="left:845px;top:518px;width:90px;height:14px;background:#e6eedb;"></div>
<div class="t" style="left:845px;top:518.19px;font-size:11px;line-height:13px;color:#000;width:88px;text-align:right;">-</div>
<div class="r" style="left:936px;top:518px;width:90px;height:14px;background:#e6eedb;"></div>
<div class="t" style="left:936px;top:518.19px;font-size:11px;line-height:13px;color:#000;width:88px;text-align:right;">-</div>
<div class="r" style="left:1027px;top:518px;width:90px;height:14px;background:#e6eedb;"></div>
<div class="t" style="left:1027px;top:518.19px;font-size:11px;line-height:13px;color:#000;width:88px;text-align:right;">(350)</div>
<div class="r" style="left:1118px;top:518px;width:90px;height:14px;background:#e6eedb;"></div>
<div class="t" style="left:1118px;top:518.19px;font-size:11px;line-height:13px;color:#000;width:88px;text-align:right;">-</div>
<div class="r" style="left:1209px;top:518px;width:90px;height:14px;background:#e6eedb;"></div>
<div class="t" style="left:1209px;top:518.19px;font-size:11px;line-height:13px;color:#000;width:88px;text-align:right;">1 450</div>
<div class="r" style="left:1300px;top:518px;width:90px;height:14px;background:#e6eedb;"></div>
<div class="t" style="left:1300px;top:518.19px;font-size:11px;line-height:13px;color:#000;width:88px;text-align:right;">(350)</div>
<div class="t" style="left:419.5px;top:518.19px;font-size:11px;line-height:13px;color:#000;">За 2025 г.</div>
<div class="r" style="left:481px;top:533px;width:90px;height:14px;background:#e6eedb;"></div>
<div class="t" style="left:481px;top:533.19px;font-size:11px;line-height:13px;color:#000;width:88px;text-align:right;">650</div>
<div class="r" style="left:572px;top:533px;width:90px;height:14px;background:#e6eedb;"></div>
<div class="t" style="left:572px;top:533.19px;font-size:11px;line-height:13px;color:#000;width:88px;text-align:right;">-</div>
<div class="r" style="left:663px;top:533px;width:90px;height:14px;background:#e6eedb;"></div>
<div class="t" style="left:663px;top:533.19px;font-size:11px;line-height:13px;color:#000;width:88px;text-align:right;">-</div>
<div class="r" style="left:754px;top:533px;width:90px;height:14px;background:#e6eedb;"></div>
<div class="t" style="left:754px;top:533.19px;font-size:11px;line-height:13px;color:#000;width:88px;text-align:right;">-</div>
<div class="r" style="left:845px;top:533px;width:90px;height:14px;background:#e6eedb;"></div>
<div class="t" style="left:845px;top:533.19px;font-size:11px;line-height:13px;color:#000;width:88px;text-align:right;">-</div>
<div class="r" style="left:936px;top:533px;width:90px;height:14px;background:#e6eedb;"></div>
<div class="t" style="left:936px;top:533.19px;font-size:11px;line-height:13px;color:#000;width:88px;text-align:right;">-</div>
<div class="r" style="left:1027px;top:533px;width:90px;height:14px;background:#e6eedb;"></div>
<div class="t" style="left:1027px;top:533.19px;font-size:11px;line-height:13px;color:#000;width:88px;text-align:right;">-</div>
<div class="r" style="left:1118px;top:533px;width:90px;height:14px;background:#e6eedb;"></div>
<div class="t" style="left:1118px;top:533.19px;font-size:11px;line-height:13px;color:#000;width:88px;text-align:right;">-</div>
<div class="r" style="left:1209px;top:533px;width:90px;height:14px;background:#e6eedb;"></div>
<div class="t" style="left:1209px;top:533.19px;font-size:11px;line-height:13px;color:#000;width:88px;text-align:right;">650</div>
<div class="r" style="left:1300px;top:533px;width:90px;height:14px;background:#e6eedb;"></div>
<div class="t" style="left:1300px;top:533.19px;font-size:11px;line-height:13px;color:#000;width:88px;text-align:right;">-</div>
<div class="t" style="left:419.5px;top:533.19px;font-size:11px;line-height:13px;color:#000;">За 2024 г.</div>
<div class="t" style="left:251.3px;top:548.49px;font-size:11px;line-height:13px;letter-spacing:-0.15px;color:#000;">в том числе:</div>
<div class="r" style="left:249px;top:562px;width:168px;height:43px;background:#fffec0;"></div>
<div class="t" style="left:251.3px;top:562.49px;font-size:11px;line-height:13px;letter-spacing:-0.15px;color:#000;">Приобретенные права в</div>
<div class="t" style="left:251.3px;top:575.09px;font-size:11px;line-height:13px;letter-spacing:-0.15px;color:#000;">рамках оказания финансовых</div>
<div class="t" style="left:251.3px;top:587.69px;font-size:11px;line-height:13px;letter-spacing:-0.15px;color:#000;">услуг</div>
<div class="r" style="left:481px;top:562px;width:90px;height:22px;background:#e6eedb;"></div>
<div class="t" style="left:481px;top:563.19px;font-size:11px;line-height:13px;color:#000;width:88px;text-align:right;">650</div>
<div class="r" style="left:572px;top:562px;width:90px;height:22px;background:#fffec0;"></div>
<div class="t" style="left:572px;top:563.19px;font-size:11px;line-height:13px;color:#000;width:88px;text-align:right;">-</div>
<div class="r" style="left:663px;top:562px;width:90px;height:22px;background:#e6eedb;"></div>
<div class="t" style="left:663px;top:563.19px;font-size:11px;line-height:13px;color:#000;width:88px;text-align:right;">300</div>
<div class="r" style="left:754px;top:562px;width:90px;height:22px;background:#e6eedb;"></div>
<div class="t" style="left:754px;top:563.19px;font-size:11px;line-height:13px;color:#000;width:88px;text-align:right;">-</div>
<div class="r" style="left:845px;top:562px;width:90px;height:22px;background:#fffec0;"></div>
<div class="t" style="left:845px;top:563.19px;font-size:11px;line-height:13px;color:#000;width:88px;text-align:right;">-</div>
<div class="r" style="left:936px;top:562px;width:90px;height:22px;background:#e6eedb;"></div>
<div class="t" style="left:936px;top:563.19px;font-size:11px;line-height:13px;color:#000;width:88px;text-align:right;">-</div>
<div class="r" style="left:1027px;top:562px;width:90px;height:22px;background:#e6eedb;"></div>
<div class="t" style="left:1027px;top:563.19px;font-size:11px;line-height:13px;color:#000;width:88px;text-align:right;">-</div>
<div class="r" style="left:1118px;top:562px;width:90px;height:22px;background:#fffec0;"></div>
<div class="t" style="left:1118px;top:563.19px;font-size:11px;line-height:13px;color:#000;width:88px;text-align:right;">-</div>
<div class="r" style="left:1209px;top:562px;width:90px;height:22px;background:#e6eedb;"></div>
<div class="t" style="left:1209px;top:563.19px;font-size:11px;line-height:13px;color:#000;width:88px;text-align:right;">950</div>
<div class="r" style="left:1300px;top:562px;width:90px;height:22px;background:#fffec0;"></div>
<div class="t" style="left:1300px;top:563.19px;font-size:11px;line-height:13px;color:#000;width:88px;text-align:right;">-</div>
<div class="t" style="left:419.5px;top:563.19px;font-size:11px;line-height:13px;color:#000;">За 2025 г.</div>
<div class="r" style="left:481px;top:585px;width:90px;height:20px;background:#e6eedb;"></div>
<div class="t" style="left:481px;top:585.19px;font-size:11px;line-height:13px;color:#000;width:88px;text-align:right;">650</div>
<div class="r" style="left:572px;top:585px;width:90px;height:20px;background:#fffec0;"></div>
<div class="t" style="left:572px;top:585.19px;font-size:11px;line-height:13px;color:#000;width:88px;text-align:right;">-</div>
<div class="r" style="left:663px;top:585px;width:90px;height:20px;background:#e6eedb;"></div>
<div class="t" style="left:663px;top:585.19px;font-size:11px;line-height:13px;color:#000;width:88px;text-align:right;">-</div>
<div class="r" style="left:754px;top:585px;width:90px;height:20px;background:#e6eedb;"></div>
<div class="t" style="left:754px;top:585.19px;font-size:11px;line-height:13px;color:#000;width:88px;text-align:right;">-</div>
<div class="r" style="left:845px;top:585px;width:90px;height:20px;background:#fffec0;"></div>
<div class="t" style="left:845px;top:585.19px;font-size:11px;line-height:13px;color:#000;width:88px;text-align:right;">-</div>
<div class="r" style="left:936px;top:585px;width:90px;height:20px;background:#e6eedb;"></div>
<div class="t" style="left:936px;top:585.19px;font-size:11px;line-height:13px;color:#000;width:88px;text-align:right;">-</div>
<div class="r" style="left:1027px;top:585px;width:90px;height:20px;background:#e6eedb;"></div>
<div class="t" style="left:1027px;top:585.19px;font-size:11px;line-height:13px;color:#000;width:88px;text-align:right;">-</div>
<div class="r" style="left:1118px;top:585px;width:90px;height:20px;background:#fffec0;"></div>
<div class="t" style="left:1118px;top:585.19px;font-size:11px;line-height:13px;color:#000;width:88px;text-align:right;">-</div>
<div class="r" style="left:1209px;top:585px;width:90px;height:20px;background:#e6eedb;"></div>
<div class="t" style="left:1209px;top:585.19px;font-size:11px;line-height:13px;color:#000;width:88px;text-align:right;">650</div>
<div class="r" style="left:1300px;top:585px;width:90px;height:20px;background:#fffec0;"></div>
<div class="t" style="left:1300px;top:585.19px;font-size:11px;line-height:13px;color:#000;width:88px;text-align:right;">-</div>
<div class="t" style="left:419.5px;top:585.19px;font-size:11px;line-height:13px;color:#000;">За 2024 г.</div>
<div class="r" style="left:249px;top:606px;width:168px;height:29px;background:#fffec0;"></div>
<div class="t" style="left:251.3px;top:606.49px;font-size:11px;line-height:13px;letter-spacing:-0.15px;color:#000;">Депозитные счета</div>
<div class="r" style="left:481px;top:606px;width:90px;height:14px;background:#e6eedb;"></div>
<div class="t" style="left:481px;top:606.19px;font-size:11px;line-height:13px;color:#000;width:88px;text-align:right;">-</div>
<div class="r" style="left:572px;top:606px;width:90px;height:14px;background:#fffec0;"></div>
<div class="t" style="left:572px;top:606.19px;font-size:11px;line-height:13px;color:#000;width:88px;text-align:right;">-</div>
<div class="r" style="left:663px;top:606px;width:90px;height:14px;background:#e6eedb;"></div>
<div class="t" style="left:663px;top:606.19px;font-size:11px;line-height:13px;color:#000;width:88px;text-align:right;">1 000</div>
<div class="r" style="left:754px;top:606px;width:90px;height:14px;background:#e6eedb;"></div>
<div class="t" style="left:754px;top:606.19px;font-size:11px;line-height:13px;color:#000;width:88px;text-align:right;">(500)</div>
<div class="r" style="left:845px;top:606px;width:90px;height:14px;background:#fffec0;"></div>
<div class="t" style="left:845px;top:606.19px;font-size:11px;line-height:13px;color:#000;width:88px;text-align:right;">-</div>
<div class="r" style="left:936px;top:606px;width:90px;height:14px;background:#e6eedb;"></div>
<div class="t" style="left:936px;top:606.19px;font-size:11px;line-height:13px;color:#000;width:88px;text-align:right;">-</div>
<div class="r" style="left:1027px;top:606px;width:90px;height:14px;background:#e6eedb;"></div>
<div class="t" style="left:1027px;top:606.19px;font-size:11px;line-height:13px;color:#000;width:88px;text-align:right;">-</div>
<div class="r" style="left:1118px;top:606px;width:90px;height:14px;background:#fffec0;"></div>
<div class="t" style="left:1118px;top:606.19px;font-size:11px;line-height:13px;color:#000;width:88px;text-align:right;">-</div>
<div class="r" style="left:1209px;top:606px;width:90px;height:14px;background:#e6eedb;"></div>
<div class="t" style="left:1209px;top:606.19px;font-size:11px;line-height:13px;color:#000;width:88px;text-align:right;">500</div>
<div class="r" style="left:1300px;top:606px;width:90px;height:14px;background:#fffec0;"></div>
<div class="t" style="left:1300px;top:606.19px;font-size:11px;line-height:13px;color:#000;width:88px;text-align:right;">-</div>
<div class="t" style="left:419.5px;top:606.19px;font-size:11px;line-height:13px;color:#000;">За 2025 г.</div>
<div class="r" style="left:481px;top:621px;width:90px;height:14px;background:#e6eedb;"></div>
<div class="t" style="left:481px;top:621.19px;font-size:11px;line-height:13px;color:#000;width:88px;text-align:right;">-</div>
<div class="r" style="left:572px;top:621px;width:90px;height:14px;background:#fffec0;"></div>
<div class="t" style="left:572px;top:621.19px;font-size:11px;line-height:13px;color:#000;width:88px;text-align:right;">-</div>
<div class="r" style="left:663px;top:621px;width:90px;height:14px;background:#e6eedb;"></div>
<div class="t" style="left:663px;top:621.19px;font-size:11px;line-height:13px;color:#000;width:88px;text-align:right;">-</div>
<div class="r" style="left:754px;top:621px;width:90px;height:14px;background:#e6eedb;"></div>
<div class="t" style="left:754px;top:621.19px;font-size:11px;line-height:13px;color:#000;width:88px;text-align:right;">-</div>
<div class="r" style="left:845px;top:621px;width:90px;height:14px;background:#fffec0;"></div>
<div class="t" style="left:845px;top:621.19px;font-size:11px;line-height:13px;color:#000;width:88px;text-align:right;">-</div>
<div class="r" style="left:936px;top:621px;width:90px;height:14px;background:#e6eedb;"></div>
<div class="t" style="left:936px;top:621.19px;font-size:11px;line-height:13px;color:#000;width:88px;text-align:right;">-</div>
<div class="r" style="left:1027px;top:621px;width:90px;height:14px;background:#e6eedb;"></div>
<div class="t" style="left:1027px;top:621.19px;font-size:11px;line-height:13px;color:#000;width:88px;text-align:right;">-</div>
<div class="r" style="left:1118px;top:621px;width:90px;height:14px;background:#fffec0;"></div>
<div class="t" style="left:1118px;top:621.19px;font-size:11px;line-height:13px;color:#000;width:88px;text-align:right;">-</div>
<div class="r" style="left:1209px;top:621px;width:90px;height:14px;background:#e6eedb;"></div>
<div class="t" style="left:1209px;top:621.19px;font-size:11px;line-height:13px;color:#000;width:88px;text-align:right;">-</div>
<div class="r" style="left:1300px;top:621px;width:90px;height:14px;background:#fffec0;"></div>
<div class="t" style="left:1300px;top:621.19px;font-size:11px;line-height:13px;color:#000;width:88px;text-align:right;">-</div>
<div class="t" style="left:419.5px;top:621.19px;font-size:11px;line-height:13px;color:#000;">За 2024 г.</div>
<div class="r" style="left:249px;top:636px;width:168px;height:29px;background:#fffec0;"></div>
<div class="t" style="left:251.3px;top:636.49px;font-size:11px;line-height:13px;letter-spacing:-0.15px;color:#000;">Депозитные счета (в валюте)</div>
<div class="r" style="left:481px;top:636px;width:90px;height:14px;background:#e6eedb;"></div>
<div class="t" style="left:481px;top:636.19px;font-size:11px;line-height:13px;color:#000;width:88px;text-align:right;">-</div>
<div class="r" style="left:572px;top:636px;width:90px;height:14px;background:#fffec0;"></div>
<div class="t" style="left:572px;top:636.19px;font-size:11px;line-height:13px;color:#000;width:88px;text-align:right;">-</div>
<div class="r" style="left:663px;top:636px;width:90px;height:14px;background:#e6eedb;"></div>
<div class="t" style="left:663px;top:636.19px;font-size:11px;line-height:13px;color:#000;width:88px;text-align:right;">-</div>
<div class="r" style="left:754px;top:636px;width:90px;height:14px;background:#e6eedb;"></div>
<div class="t" style="left:754px;top:636.19px;font-size:11px;line-height:13px;color:#000;width:88px;text-align:right;">-</div>
<div class="r" style="left:845px;top:636px;width:90px;height:14px;background:#fffec0;"></div>
<div class="t" style="left:845px;top:636.19px;font-size:11px;line-height:13px;color:#000;width:88px;text-align:right;">-</div>
<div class="r" style="left:936px;top:636px;width:90px;height:14px;background:#e6eedb;"></div>
<div class="t" style="left:936px;top:636.19px;font-size:11px;line-height:13px;color:#000;width:88px;text-align:right;">-</div>
<div class="r" style="left:1027px;top:636px;width:90px;height:14px;background:#e6eedb;"></div>
<div class="t" style="left:1027px;top:636.19px;font-size:11px;line-height:13px;color:#000;width:88px;text-align:right;">-</div>
<div class="r" style="left:1118px;top:636px;width:90px;height:14px;background:#fffec0;"></div>
<div class="t" style="left:1118px;top:636.19px;font-size:11px;line-height:13px;color:#000;width:88px;text-align:right;">-</div>
<div class="r" style="left:1209px;top:636px;width:90px;height:14px;background:#e6eedb;"></div>
<div class="t" style="left:1209px;top:636.19px;font-size:11px;line-height:13px;color:#000;width:88px;text-align:right;">-</div>
<div class="r" style="left:1300px;top:636px;width:90px;height:14px;background:#fffec0;"></div>
<div class="t" style="left:1300px;top:636.19px;font-size:11px;line-height:13px;color:#000;width:88px;text-align:right;">-</div>
<div class="t" style="left:419.5px;top:636.19px;font-size:11px;line-height:13px;color:#000;">За 2025 г.</div>
<div class="r" style="left:481px;top:651px;width:90px;height:14px;background:#e6eedb;"></div>
<div class="t" style="left:481px;top:651.19px;font-size:11px;line-height:13px;color:#000;width:88px;text-align:right;">-</div>
<div class="r" style="left:572px;top:651px;width:90px;height:14px;background:#fffec0;"></div>
<div class="t" style="left:572px;top:651.19px;font-size:11px;line-height:13px;color:#000;width:88px;text-align:right;">-</div>
<div class="r" style="left:663px;top:651px;width:90px;height:14px;background:#e6eedb;"></div>
<div class="t" style="left:663px;top:651.19px;font-size:11px;line-height:13px;color:#000;width:88px;text-align:right;">-</div>
<div class="r" style="left:754px;top:651px;width:90px;height:14px;background:#e6eedb;"></div>
<div class="t" style="left:754px;top:651.19px;font-size:11px;line-height:13px;color:#000;width:88px;text-align:right;">-</div>
<div class="r" style="left:845px;top:651px;width:90px;height:14px;background:#fffec0;"></div>
<div class="t" style="left:845px;top:651.19px;font-size:11px;line-height:13px;color:#000;width:88px;text-align:right;">-</div>
<div class="r" style="left:936px;top:651px;width:90px;height:14px;background:#e6eedb;"></div>
<div class="t" style="left:936px;top:651.19px;font-size:11px;line-height:13px;color:#000;width:88px;text-align:right;">-</div>
<div class="r" style="left:1027px;top:651px;width:90px;height:14px;background:#e6eedb;"></div>
<div class="t" style="left:1027px;top:651.19px;font-size:11px;line-height:13px;color:#000;width:88px;text-align:right;">-</div>
<div class="r" style="left:1118px;top:651px;width:90px;height:14px;background:#fffec0;"></div>
<div class="t" style="left:1118px;top:651.19px;font-size:11px;line-height:13px;color:#000;width:88px;text-align:right;">-</div>
<div class="r" style="left:1209px;top:651px;width:90px;height:14px;background:#e6eedb;"></div>
<div class="t" style="left:1209px;top:651.19px;font-size:11px;line-height:13px;color:#000;width:88px;text-align:right;">-</div>
<div class="r" style="left:1300px;top:651px;width:90px;height:14px;background:#fffec0;"></div>
<div class="t" style="left:1300px;top:651.19px;font-size:11px;line-height:13px;color:#000;width:88px;text-align:right;">-</div>
<div class="t" style="left:419.5px;top:651.19px;font-size:11px;line-height:13px;color:#000;">За 2024 г.</div>
<div class="r" style="left:249px;top:666px;width:168px;height:29px;background:#fffec0;"></div>
<div class="t" style="left:251.3px;top:666.49px;font-size:11px;line-height:13px;letter-spacing:-0.15px;color:#000;">Резервы под обесценение</div>
<div class="t" style="left:251.3px;top:679.39px;font-size:11px;line-height:13px;letter-spacing:-0.15px;color:#000;">финансовых вложений</div>
<div class="r" style="left:481px;top:666px;width:90px;height:14px;background:#fffec0;"></div>
<div class="t" style="left:481px;top:666.19px;font-size:11px;line-height:13px;color:#000;width:88px;text-align:right;">-</div>
<div class="r" style="left:572px;top:666px;width:90px;height:14px;background:#e6eedb;"></div>
<div class="t" style="left:572px;top:666.19px;font-size:11px;line-height:13px;color:#000;width:88px;text-align:right;">-</div>
<div class="r" style="left:663px;top:666px;width:90px;height:14px;background:#fffec0;"></div>
<div class="t" style="left:663px;top:666.19px;font-size:11px;line-height:13px;color:#000;width:88px;text-align:right;">-</div>
<div class="r" style="left:754px;top:666px;width:90px;height:14px;background:#fffec0;"></div>
<div class="t" style="left:754px;top:666.19px;font-size:11px;line-height:13px;color:#000;width:88px;text-align:right;">-</div>
<div class="r" style="left:845px;top:666px;width:90px;height:14px;background:#fffec0;"></div>
<div class="t" style="left:845px;top:666.19px;font-size:11px;line-height:13px;color:#000;width:88px;text-align:right;">-</div>
<div class="r" style="left:936px;top:666px;width:90px;height:14px;background:#fffec0;"></div>
<div class="t" style="left:936px;top:666.19px;font-size:11px;line-height:13px;color:#000;width:88px;text-align:right;">-</div>
<div class="r" style="left:1027px;top:666px;width:90px;height:14px;background:#e6eedb;"></div>
<div class="t" style="left:1027px;top:666.19px;font-size:11px;line-height:13px;color:#000;width:88px;text-align:right;">(350)</div>
<div class="r" style="left:1118px;top:666px;width:90px;height:14px;background:#fffec0;"></div>
<div class="t" style="left:1118px;top:666.19px;font-size:11px;line-height:13px;color:#000;width:88px;text-align:right;">-</div>
<div class="r" style="left:1209px;top:666px;width:90px;height:14px;background:#fffec0;"></div>
<div class="t" style="left:1209px;top:666.19px;font-size:11px;line-height:13px;color:#000;width:88px;text-align:right;">-</div>
<div class="r" style="left:1300px;top:666px;width:90px;height:14px;background:#e6eedb;"></div>
<div class="t" style="left:1300px;top:666.19px;font-size:11px;line-height:13px;color:#000;width:88px;text-align:right;">(350)</div>
<div class="t" style="left:419.5px;top:666.19px;font-size:11px;line-height:13px;color:#000;">За 2025 г.</div>
<div class="r" style="left:481px;top:681px;width:90px;height:14px;background:#fffec0;"></div>
<div class="t" style="left:481px;top:681.19px;font-size:11px;line-height:13px;color:#000;width:88px;text-align:right;">-</div>
<div class="r" style="left:572px;top:681px;width:90px;height:14px;background:#e6eedb;"></div>
<div class="t" style="left:572px;top:681.19px;font-size:11px;line-height:13px;color:#000;width:88px;text-align:right;">-</div>
<div class="r" style="left:663px;top:681px;width:90px;height:14px;background:#fffec0;"></div>
<div class="t" style="left:663px;top:681.19px;font-size:11px;line-height:13px;color:#000;width:88px;text-align:right;">-</div>
<div class="r" style="left:754px;top:681px;width:90px;height:14px;background:#fffec0;"></div>
<div class="t" style="left:754px;top:681.19px;font-size:11px;line-height:13px;color:#000;width:88px;text-align:right;">-</div>
<div class="r" style="left:845px;top:681px;width:90px;height:14px;background:#fffec0;"></div>
<div class="t" style="left:845px;top:681.19px;font-size:11px;line-height:13px;color:#000;width:88px;text-align:right;">-</div>
<div class="r" style="left:936px;top:681px;width:90px;height:14px;background:#fffec0;"></div>
<div class="t" style="left:936px;top:681.19px;font-size:11px;line-height:13px;color:#000;width:88px;text-align:right;">-</div>
<div class="r" style="left:1027px;top:681px;width:90px;height:14px;background:#e6eedb;"></div>
<div class="t" style="left:1027px;top:681.19px;font-size:11px;line-height:13px;color:#000;width:88px;text-align:right;">-</div>
<div class="r" style="left:1118px;top:681px;width:90px;height:14px;background:#fffec0;"></div>
<div class="t" style="left:1118px;top:681.19px;font-size:11px;line-height:13px;color:#000;width:88px;text-align:right;">-</div>
<div class="r" style="left:1209px;top:681px;width:90px;height:14px;background:#fffec0;"></div>
<div class="t" style="left:1209px;top:681.19px;font-size:11px;line-height:13px;color:#000;width:88px;text-align:right;">-</div>
<div class="r" style="left:1300px;top:681px;width:90px;height:14px;background:#e6eedb;"></div>
<div class="t" style="left:1300px;top:681.19px;font-size:11px;line-height:13px;color:#000;width:88px;text-align:right;">-</div>
<div class="t" style="left:419.5px;top:681.19px;font-size:11px;line-height:13px;color:#000;">За 2024 г.</div>
<div class="t" style="left:238px;top:696.49px;font-size:11px;line-height:13px;letter-spacing:-0.15px;color:#000;">Итого</div>
<div class="r" style="left:481px;top:696px;width:90px;height:14px;background:#c0dcc0;"></div>
<div class="t" style="left:481px;top:696.19px;font-size:11px;line-height:13px;color:#000;width:88px;text-align:right;">3 050</div>
<div class="r" style="left:572px;top:696px;width:90px;height:14px;background:#c0dcc0;"></div>
<div class="t" style="left:572px;top:696.19px;font-size:11px;line-height:13px;color:#000;width:88px;text-align:right;">(200)</div>
<div class="r" style="left:663px;top:696px;width:90px;height:14px;background:#c0dcc0;"></div>
<div class="t" style="left:663px;top:696.19px;font-size:11px;line-height:13px;color:#000;width:88px;text-align:right;">2 300</div>
<div class="r" style="left:754px;top:696px;width:90px;height:14px;background:#c0dcc0;"></div>
<div class="t" style="left:754px;top:696.19px;font-size:11px;line-height:13px;color:#000;width:88px;text-align:right;">(1 600)</div>
<div class="r" style="left:845px;top:696px;width:90px;height:14px;background:#c0dcc0;"></div>
<div class="t" style="left:845px;top:696.19px;font-size:11px;line-height:13px;color:#000;width:88px;text-align:right;">-</div>
<div class="r" style="left:936px;top:696px;width:90px;height:14px;background:#c0dcc0;"></div>
<div class="t" style="left:936px;top:696.19px;font-size:11px;line-height:13px;color:#000;width:88px;text-align:right;">450</div>
<div class="r" style="left:1027px;top:696px;width:90px;height:14px;background:#c0dcc0;"></div>
<div class="t" style="left:1027px;top:696.19px;font-size:11px;line-height:13px;color:#000;width:88px;text-align:right;">(470)</div>
<div class="r" style="left:1118px;top:696px;width:90px;height:14px;background:#c0dcc0;"></div>
<div class="t" style="left:1118px;top:696.19px;font-size:11px;line-height:13px;color:#000;width:88px;text-align:right;">-</div>
<div class="r" style="left:1209px;top:696px;width:90px;height:14px;background:#c0dcc0;"></div>
<div class="t" style="left:1209px;top:696.19px;font-size:11px;line-height:13px;color:#000;width:88px;text-align:right;">4 180</div>
<div class="r" style="left:1300px;top:696px;width:90px;height:14px;background:#c0dcc0;"></div>
<div class="t" style="left:1300px;top:696.19px;font-size:11px;line-height:13px;color:#000;width:88px;text-align:right;">(650)</div>
<div class="t" style="left:419.5px;top:696.19px;font-size:11px;line-height:13px;color:#000;">За 2025 г.</div>
<div class="r" style="left:481px;top:711px;width:90px;height:14px;background:#c0dcc0;"></div>
<div class="t" style="left:481px;top:711.19px;font-size:11px;line-height:13px;color:#000;width:88px;text-align:right;">1 550</div>
<div class="r" style="left:572px;top:711px;width:90px;height:14px;background:#c0dcc0;"></div>
<div class="t" style="left:572px;top:711.19px;font-size:11px;line-height:13px;color:#000;width:88px;text-align:right;">-</div>
<div class="r" style="left:663px;top:711px;width:90px;height:14px;background:#c0dcc0;"></div>
<div class="t" style="left:663px;top:711.19px;font-size:11px;line-height:13px;color:#000;width:88px;text-align:right;">1 300</div>
<div class="r" style="left:754px;top:711px;width:90px;height:14px;background:#c0dcc0;"></div>
<div class="t" style="left:754px;top:711.19px;font-size:11px;line-height:13px;color:#000;width:88px;text-align:right;">-</div>
<div class="r" style="left:845px;top:711px;width:90px;height:14px;background:#c0dcc0;"></div>
<div class="t" style="left:845px;top:711.19px;font-size:11px;line-height:13px;color:#000;width:88px;text-align:right;">-</div>
<div class="r" style="left:936px;top:711px;width:90px;height:14px;background:#c0dcc0;"></div>
<div class="t" style="left:936px;top:711.19px;font-size:11px;line-height:13px;color:#000;width:88px;text-align:right;">200</div>
<div class="r" style="left:1027px;top:711px;width:90px;height:14px;background:#c0dcc0;"></div>
<div class="t" style="left:1027px;top:711.19px;font-size:11px;line-height:13px;color:#000;width:88px;text-align:right;">(200)</div>
<div class="r" style="left:1118px;top:711px;width:90px;height:14px;background:#c0dcc0;"></div>
<div class="t" style="left:1118px;top:711.19px;font-size:11px;line-height:13px;color:#000;width:88px;text-align:right;">-</div>
<div class="r" style="left:1209px;top:711px;width:90px;height:14px;background:#c0dcc0;"></div>
<div class="t" style="left:1209px;top:711.19px;font-size:11px;line-height:13px;color:#000;width:88px;text-align:right;">3 050</div>
<div class="r" style="left:1300px;top:711px;width:90px;height:14px;background:#c0dcc0;"></div>
<div class="t" style="left:1300px;top:711.19px;font-size:11px;line-height:13px;color:#000;width:88px;text-align:right;">(200)</div>
<div class="t" style="left:419.5px;top:711.19px;font-size:11px;line-height:13px;color:#000;">За 2024 г.</div>
<div class="r" style="left:235px;top:292px;width:183px;height:1px;background:#000;"></div>
<div class="r" style="left:235px;top:322px;width:183px;height:1px;background:#000;"></div>
<div class="r" style="left:235px;top:367px;width:183px;height:1px;background:#000;"></div>
<div class="r" style="left:235px;top:397px;width:183px;height:1px;background:#000;"></div>
<div class="r" style="left:235px;top:427px;width:183px;height:1px;background:#000;"></div>
<div class="r" style="left:235px;top:457px;width:183px;height:1px;background:#000;"></div>
<div class="r" style="left:235px;top:487px;width:183px;height:1px;background:#000;"></div>
<div class="r" style="left:235px;top:517px;width:183px;height:1px;background:#000;"></div>
<div class="r" style="left:235px;top:547px;width:183px;height:1px;background:#000;"></div>
<div class="r" style="left:235px;top:605px;width:183px;height:1px;background:#000;"></div>
<div class="r" style="left:235px;top:635px;width:183px;height:1px;background:#000;"></div>
<div class="r" style="left:235px;top:665px;width:183px;height:1px;background:#000;"></div>
<div class="r" style="left:235px;top:695px;width:183px;height:1px;background:#000;"></div>
<div class="r" style="left:235px;top:725px;width:183px;height:1px;background:#000;"></div>
<div class="r" style="left:417px;top:292px;width:974px;height:1px;background:#1c1c1c;"></div>
<div class="r" style="left:417px;top:307px;width:974px;height:1px;background:#1c1c1c;"></div>
<div class="r" style="left:417px;top:322px;width:974px;height:1px;background:#1c1c1c;"></div>
<div class="r" style="left:417px;top:352px;width:974px;height:1px;background:#1c1c1c;"></div>
<div class="r" style="left:417px;top:367px;width:974px;height:1px;background:#1c1c1c;"></div>
<div class="r" style="left:417px;top:382px;width:974px;height:1px;background:#1c1c1c;"></div>
<div class="r" style="left:417px;top:397px;width:974px;height:1px;background:#1c1c1c;"></div>
<div class="r" style="left:417px;top:412px;width:974px;height:1px;background:#1c1c1c;"></div>
<div class="r" style="left:417px;top:427px;width:974px;height:1px;background:#1c1c1c;"></div>
<div class="r" style="left:417px;top:442px;width:974px;height:1px;background:#1c1c1c;"></div>
<div class="r" style="left:417px;top:457px;width:974px;height:1px;background:#1c1c1c;"></div>
<div class="r" style="left:417px;top:472px;width:974px;height:1px;background:#1c1c1c;"></div>
<div class="r" style="left:417px;top:487px;width:974px;height:1px;background:#1c1c1c;"></div>
<div class="r" style="left:417px;top:502px;width:974px;height:1px;background:#1c1c1c;"></div>
<div class="r" style="left:417px;top:517px;width:974px;height:1px;background:#1c1c1c;"></div>
<div class="r" style="left:417px;top:532px;width:974px;height:1px;background:#1c1c1c;"></div>
<div class="r" style="left:417px;top:547px;width:974px;height:1px;background:#1c1c1c;"></div>
<div class="r" style="left:417px;top:584px;width:974px;height:1px;background:#1c1c1c;"></div>
<div class="r" style="left:417px;top:605px;width:974px;height:1px;background:#1c1c1c;"></div>
<div class="r" style="left:417px;top:620px;width:974px;height:1px;background:#1c1c1c;"></div>
<div class="r" style="left:417px;top:635px;width:974px;height:1px;background:#1c1c1c;"></div>
<div class="r" style="left:417px;top:650px;width:974px;height:1px;background:#1c1c1c;"></div>
<div class="r" style="left:417px;top:665px;width:974px;height:1px;background:#1c1c1c;"></div>
<div class="r" style="left:417px;top:680px;width:974px;height:1px;background:#1c1c1c;"></div>
<div class="r" style="left:417px;top:695px;width:974px;height:1px;background:#1c1c1c;"></div>
<div class="r" style="left:417px;top:710px;width:974px;height:1px;background:#1c1c1c;"></div>
<div class="r" style="left:417px;top:725px;width:974px;height:1px;background:#1c1c1c;"></div>
<div class="r" style="left:235px;top:292px;width:1px;height:434px;background:#000;"></div>
<div class="r" style="left:417px;top:292px;width:1px;height:434px;background:#000;"></div>
<div class="r" style="left:480px;top:292px;width:1px;height:434px;background:#000;"></div>
<div class="r" style="left:571px;top:292px;width:1px;height:434px;background:#000;"></div>
<div class="r" style="left:662px;top:292px;width:1px;height:434px;background:#000;"></div>
<div class="r" style="left:753px;top:292px;width:1px;height:434px;background:#000;"></div>
<div class="r" style="left:844px;top:292px;width:1px;height:434px;background:#000;"></div>
<div class="r" style="left:935px;top:292px;width:1px;height:434px;background:#000;"></div>
<div class="r" style="left:1026px;top:292px;width:1px;height:434px;background:#000;"></div>
<div class="r" style="left:1117px;top:292px;width:1px;height:434px;background:#000;"></div>
<div class="r" style="left:1208px;top:292px;width:1px;height:434px;background:#000;"></div>
<div class="r" style="left:1299px;top:292px;width:1px;height:434px;background:#000;"></div>
<div class="r" style="left:1390px;top:292px;width:1px;height:434px;background:#000;"></div>
<div class="r" style="left:235px;top:192px;width:1156px;height:1px;background:#000;"></div>
<div class="r" style="left:480px;top:207px;width:911px;height:1px;background:#000;"></div>
<div class="r" style="left:753px;top:250px;width:183px;height:1px;background:#000;"></div>
<div class="r" style="left:235px;top:192px;width:1px;height:100px;background:#000;"></div>
<div class="r" style="left:417px;top:192px;width:1px;height:100px;background:#000;"></div>
<div class="r" style="left:480px;top:192px;width:1px;height:100px;background:#000;"></div>
<div class="r" style="left:662px;top:192px;width:1px;height:100px;background:#000;"></div>
<div class="r" style="left:1208px;top:192px;width:1px;height:100px;background:#000;"></div>
<div class="r" style="left:1390px;top:192px;width:1px;height:100px;background:#000;"></div>
<div class="r" style="left:571px;top:207px;width:1px;height:85px;background:#000;"></div>
<div class="r" style="left:753px;top:207px;width:1px;height:85px;background:#000;"></div>
<div class="r" style="left:935px;top:207px;width:1px;height:85px;background:#000;"></div>
<div class="r" style="left:1026px;top:207px;width:1px;height:85px;background:#000;"></div>
<div class="r" style="left:1117px;top:207px;width:1px;height:85px;background:#000;"></div>
<div class="r" style="left:1299px;top:207px;width:1px;height:85px;background:#000;"></div>
<div class="r" style="left:844px;top:250px;width:1px;height:42px;background:#000;"></div>
<div class="t" style="left:236px;top:236.29px;font-size:11px;line-height:13px;color:#000;width:181px;text-align:center;">Наименование показателя</div>
<div class="t" style="left:418px;top:236.29px;font-size:11px;line-height:13px;color:#000;width:62px;text-align:center;">Период</div>
<div class="t" style="left:481px;top:194.39px;font-size:11px;line-height:13px;color:#000;width:181px;text-align:center;">На начало года</div>
<div class="t" style="left:481px;top:236.29px;font-size:11px;line-height:13px;color:#000;width:90px;text-align:center;">первоначальная</div>
<div class="t" style="left:481px;top:249.29px;font-size:11px;line-height:13px;color:#000;width:90px;text-align:center;">стоимость</div>
<div class="t" style="left:572px;top:236.29px;font-size:11px;line-height:13px;color:#000;width:90px;text-align:center;">накопленная</div>
<div class="t" style="left:572px;top:249.29px;font-size:11px;line-height:13px;color:#000;width:90px;text-align:center;">корректировка</div>
<div class="t" style="left:663px;top:194.39px;font-size:11px;line-height:13px;color:#000;width:545px;text-align:center;">Изменения за период</div>
<div class="t" style="left:663px;top:244.09px;font-size:11px;line-height:13px;color:#000;width:90px;text-align:center;">поступило</div>
<div class="t" style="left:754px;top:222.69px;font-size:11px;line-height:13px;color:#000;width:181px;text-align:center;">списано</div>
<div class="t" style="left:754px;top:256.99px;font-size:11px;line-height:13px;color:#000;width:90px;text-align:center;">первоначальная</div>
<div class="t" style="left:754px;top:269.99px;font-size:11px;line-height:13px;color:#000;width:90px;text-align:center;">стоимость</div>
<div class="t" style="left:845px;top:256.99px;font-size:11px;line-height:13px;color:#000;width:90px;text-align:center;">накопленная</div>
<div class="t" style="left:845px;top:269.99px;font-size:11px;line-height:13px;color:#000;width:90px;text-align:center;">корректировка</div>
<div class="t" style="left:936px;top:208.19px;font-size:11px;line-height:13px;color:#000;width:90px;text-align:center;">проценты</div>
<div class="t" style="left:936px;top:221.29px;font-size:11px;line-height:13px;color:#000;width:90px;text-align:center;">(включая</div>
<div class="t" style="left:936px;top:234.39px;font-size:11px;line-height:13px;color:#000;width:90px;text-align:center;">доведение</div>
<div class="t" style="left:936px;top:247.49px;font-size:11px;line-height:13px;color:#000;width:90px;text-align:center;">первоначальной</div>
<div class="t" style="left:936px;top:260.59px;font-size:11px;line-height:13px;color:#000;width:90px;text-align:center;">стоимости до</div>
<div class="t" style="left:936px;top:273.69px;font-size:11px;line-height:13px;color:#000;width:90px;text-align:center;">номинальной)</div>
<div class="t" style="left:1027px;top:214.99px;font-size:11px;line-height:13px;color:#000;width:90px;text-align:center;">текущей</div>
<div class="t" style="left:1027px;top:228.19px;font-size:11px;line-height:13px;color:#000;width:90px;text-align:center;">рыночной</div>
<div class="t" style="left:1027px;top:241.39px;font-size:11px;line-height:13px;color:#000;width:90px;text-align:center;">стоимости/резе</div>
<div class="t" style="left:1027px;top:254.59px;font-size:11px;line-height:13px;color:#000;width:90px;text-align:center;">рва под</div>
<div class="t" style="left:1027px;top:267.79px;font-size:11px;line-height:13px;color:#000;width:90px;text-align:center;">обесценение</div>
<div class="t" style="left:1118px;top:236.29px;font-size:11px;line-height:13px;color:#000;width:90px;text-align:center;">переклассифиц</div>
<div class="t" style="left:1118px;top:249.29px;font-size:11px;line-height:13px;color:#000;width:90px;text-align:center;">ировано</div>
<div class="t" style="left:1209px;top:194.39px;font-size:11px;line-height:13px;color:#000;width:181px;text-align:center;">На конец периода</div>
<div class="t" style="left:1209px;top:236.29px;font-size:11px;line-height:13px;color:#000;width:90px;text-align:center;">первоначальная</div>
<div class="t" style="left:1209px;top:249.29px;font-size:11px;line-height:13px;color:#000;width:90px;text-align:center;">стоимость</div>
<div class="t" style="left:1300px;top:236.29px;font-size:11px;line-height:13px;color:#000;width:90px;text-align:center;">накопленная</div>
<div class="t" style="left:1300px;top:249.29px;font-size:11px;line-height:13px;color:#000;width:90px;text-align:center;">корректировка</div>
<div class="r" style="left:477px;top:289px;width:94px;height:18px;border:2px solid #f7c514;"></div>
<svg class="r" style="left:0;top:0" width="1402" height="733">
<defs><filter id="sh" x="-20%" y="-20%" width="140%" height="140%"><feGaussianBlur stdDeviation="2.2"/></filter></defs>
<path d="M257 97.7 L288 97.7 L278.6 79.6 L307.9 97.7 L422.6 97.7 Q432.6 97.7 432.6 104.7 L432.6 166.6 Q432.6 172.6 426.6 172.6 L253.6 172.6 Q246.6 172.6 246.6 166.6 L246.6 103.7 Q246.6 97.7 257 97.7 Z" transform="translate(4.5,5)" fill="#7a7a7a" opacity="0.85" filter="url(#sh)"/>
<path d="M37 414.7 L192.3 414.7 Q202.3 414.7 202.3 421.7 L202.3 487.3 L231.6 502.7 L202.3 506 L202.3 526.3 Q202.3 532.3 196.3 532.3 L33.3 532.3 Q26.8 532.3 26.8 526.3 L26.8 420.7 Q26.8 414.7 37 414.7 Z" transform="translate(4.5,5)" fill="#7a7a7a" opacity="0.85" filter="url(#sh)"/>
<path d="M257 97.7 L288 97.7 L278.6 79.6 L307.9 97.7 L422.6 97.7 Q432.6 97.7 432.6 104.7 L432.6 166.6 Q432.6 172.6 426.6 172.6 L253.6 172.6 Q246.6 172.6 246.6 166.6 L246.6 103.7 Q246.6 97.7 257 97.7 Z" fill="#dcf7fd" stroke="#11a0c2" stroke-width="2.3" stroke-linejoin="miter"/>
<path d="M37 414.7 L192.3 414.7 Q202.3 414.7 202.3 421.7 L202.3 487.3 L231.6 502.7 L202.3 506 L202.3 526.3 Q202.3 532.3 196.3 532.3 L33.3 532.3 Q26.8 532.3 26.8 526.3 L26.8 420.7 Q26.8 414.7 37 414.7 Z" fill="#dcf7fd" stroke="#11a0c2" stroke-width="2.3" stroke-linejoin="miter"/>
</svg>
<div class="t" style="left:246.6px;top:111.16px;font-size:13.4px;line-height:16px;letter-spacing:-0.25px;color:#000;width:186px;text-align:center;">Нажмите, чтобы посмотреть</div>
<div class="t" style="left:246.6px;top:127.26px;font-size:13.4px;line-height:16px;letter-spacing:-0.25px;color:#000;width:186px;text-align:center;">расшифровку выделенного</div>
<div class="t" style="left:246.6px;top:143.36px;font-size:13.4px;line-height:16px;letter-spacing:-0.25px;color:#000;width:186px;text-align:center;">показателя</div>
<div class="t" style="left:25.3px;top:426.26px;font-size:13.4px;line-height:16px;letter-spacing:-0.2px;color:#000;width:175.5px;text-align:center;">Распределите данные по</div>
<div class="t" style="left:25.3px;top:442.16px;font-size:13.4px;line-height:16px;letter-spacing:-0.2px;color:#000;width:175.5px;text-align:center;">резерву между видами</div>
<div class="t" style="left:25.3px;top:458.06px;font-size:13.4px;line-height:16px;letter-spacing:-0.2px;color:#000;width:175.5px;text-align:center;">финансовых вложений и</div>
<div class="t" style="left:25.3px;top:473.96px;font-size:13.4px;line-height:16px;letter-spacing:-0.2px;color:#000;width:175.5px;text-align:center;">внесите другие</div>
<div class="t" style="left:25.3px;top:489.86px;font-size:13.4px;line-height:16px;letter-spacing:-0.2px;color:#000;width:175.5px;text-align:center;">корректировки при</div>
<div class="t" style="left:25.3px;top:505.76px;font-size:13.4px;line-height:16px;letter-spacing:-0.2px;color:#000;width:175.5px;text-align:center;">необходимости</div>
</body></html>
